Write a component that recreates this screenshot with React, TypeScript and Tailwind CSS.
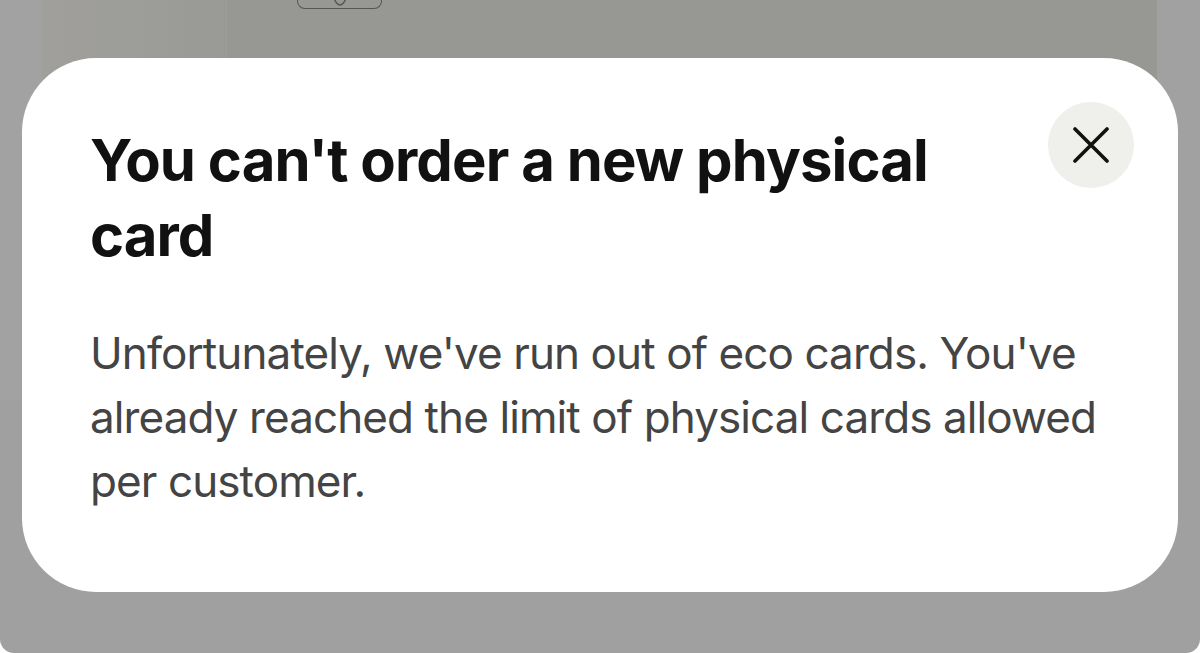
import React from 'react';

export default function App() {
  return (
    <div className="w-[1200px] h-[653px] bg-white overflow-hidden" style={{ fontFamily: 'Inter, "Noto Sans", sans-serif' }}>
      <div className="relative w-full h-[653px] bg-[#a0a0a0] rounded-b-[14px] overflow-hidden">
        {/* dimmed app content behind the sheet */}
        <div className="flex h-[400px]">
          <div className="w-[42px] bg-[#a2a2a2]"></div>
          <div className="w-[184px] bg-gradient-to-r from-[#a09f9c] to-[#999a96]"></div>
          <div className="flex-1 bg-[#979794] border-l border-[#9d9d9a]">
            <div className="ml-[70px] w-[85px] h-[11px] -mt-[2px] rounded-b-[8px] border-[1.5px] border-t-0 border-[#555] flex justify-center">
              <svg width="16" height="8" viewBox="0 0 16 8" fill="none">
                <path d="M2 0 C3 4 6 7 8 7 C10 7 13 4 14 0" stroke="#555" strokeWidth="1.4" />
              </svg>
            </div>
          </div>
          <div className="w-[43px] bg-[#a1a1a1]"></div>
        </div>

        {/* sheet */}
        <div className="absolute left-[22px] top-[58px] w-[1156px] h-[534px] bg-white rounded-[74px] pl-[68px] pr-[44px] pt-[44px]">
          <div className="flex items-start">
            <h1 className="flex-1 pt-[21px] pr-[60px] text-[58px] leading-[75px] font-bold text-[#111] tracking-[-0.9px]">
              You can't order a new physical card
            </h1>
            <button className="w-[86px] h-[86px] rounded-full bg-[#efefeb] flex items-center justify-center shrink-0">
              <svg width="36" height="36" viewBox="0 0 36 36" fill="none">
                <path d="M2 2 L34 34 M34 2 L2 34" stroke="#111" strokeWidth="3.6" strokeLinecap="round" />
              </svg>
            </button>
          </div>
          <p className="mt-[48px] pr-[24px] text-[44px] leading-[64px] text-[#444] tracking-[-0.9px]">
            Unfortunately, we've run out of eco cards. You've already reached the limit of physical cards allowed per customer.
          </p>
        </div>
      </div>
    </div>
  );
}
